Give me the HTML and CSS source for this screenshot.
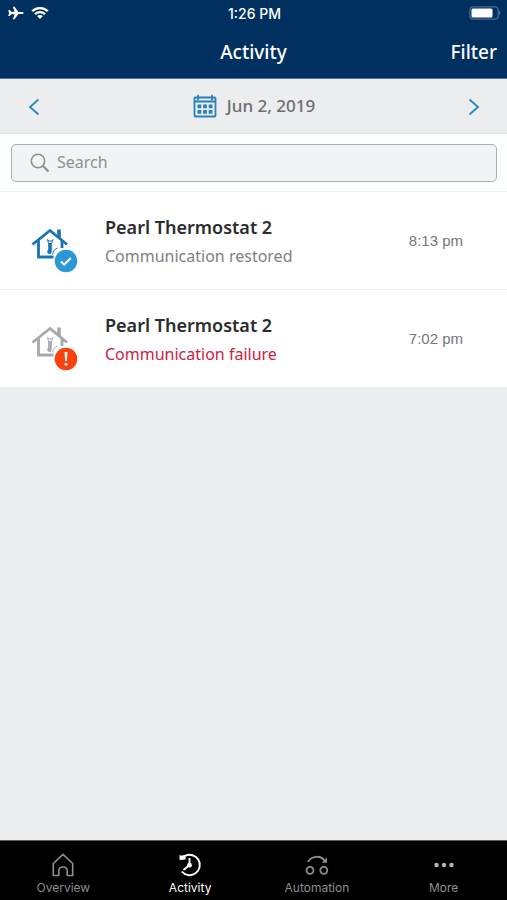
FILE: index.html
```html
<!DOCTYPE html>
<html lang="en">

<head>
    <meta charset="UTF-8">
    <meta name="viewport" content="width=device-width, initial-scale=1">
    <title>Activity</title>
    <link rel="stylesheet" href="styles.css">
</head>

<body>

    <header class="header">
        <div class="status-bar">
            <div class="status-left">
                <svg width="16" height="14" viewBox="0 0 16 14" fill="#fff">
                    <path d="M15.600 7c0 .6-.7 1.100-1.600 1.100H10.400L6.600 13.300H4.800L6.700 8.200H3.300L1.900 10H.3L1 7 .3 4h1.600l1.400 1.800h3.400L4.800.7h1.800l3.800 5.200H14c.9 0 1.600.5 1.600 1.100z" />
                </svg>
                <svg width="18" height="14" viewBox="0 0 18 14" fill="none" stroke="#fff" stroke-width="2.300">
                    <path d="M1.200 5.200c4.300-4.100 11.300-4.100 15.600 0M4 8.200c2.800-2.700 7.200-2.700 10 0" />
                    <path d="M9 13L6.100 10c1.600-1.500 4.200-1.500 5.800 0z" fill="#fff" stroke="none" />
                </svg>
            </div>
            <span class="status-time">1:26 PM</span>
            <div class="status-right">
                <svg width="32" height="14" viewBox="0 0 32 14">
                    <rect x=".8" y=".8" width="28.400" height="12.400" rx="3.500" fill="none" stroke="#4a6a92" stroke-width="1.200" />
                    <rect x="2.500" y="2.500" width="21" height="9" rx="1.500" fill="#fff" />
                    <path d="M30.300 4.800c1.500.6 1.500 3.800 0 4.400z" fill="#6682a4" />
                </svg>
            </div>
        </div>
        <div class="nav-bar">
            <h1 class="nav-title">Activity</h1>
            <button class="filter-button" type="button">Filter</button>
        </div>
    </header>

    <div class="date-bar">
        <button class="arrow" type="button" aria-label="Previous day">
            <svg width="12" height="18" viewBox="0 0 12 18" fill="none" stroke="#2a86c5" stroke-width="1.800">
                <path d="M10.500 1.500L2 9l8.500 7.500" />
            </svg>
        </button>
        <button class="date" type="button">
            <svg width="24" height="24" viewBox="0 0 24 24" fill="none" stroke="#2a80bd" stroke-width="1.800">
                <rect x="1.500" y="3.500" width="21" height="19" rx="1" />
                <path d="M1.500 7.500h21M5 .8v5.400M19 .8v5.400" />
                <path d="M4.500 12.300h15M4.500 17.800h15" stroke-width="3.800" stroke-dasharray="3.800 1.800" />
            </svg>
            Jun 2, 2019
        </button>
        <button class="arrow" type="button" aria-label="Next day">
            <svg width="12" height="18" viewBox="0 0 12 18" fill="none" stroke="#2a86c5" stroke-width="1.800">
                <path d="M1.500 1.500L10 9l-8.500 7.500" />
            </svg>
        </button>
    </div>

    <div class="search">
        <label class="search-box">
            <svg width="20" height="20" viewBox="0 0 20 20" fill="none" stroke="#8b8f92">
                <circle cx="8" cy="8" r="6.700" stroke-width="1.500" />
                <path d="M12.800 12.800l5.700 5.700" stroke-width="2.200" />
            </svg>
            <input class="search-input" type="text" placeholder="Search" aria-label="Search">
        </label>
    </div>

    <main class="content">
        <ul class="event-list">
            <li class="event">
                <svg class="event-icon" width="48" height="48" viewBox="0 0 48 48" fill="none" stroke="#1a73b5">
                    <path d="M1.500 18.500L19 4.500l17 14" stroke-width="2.800" />
                    <path d="M7.500 14.500v16.500h15M31 15v7" stroke-width="2.800" />
                    <path d="M28 3.500v8.500" stroke-width="3.600" />
                    <path d="M16.500 13.500l1.500 1.500h2.500l1.500-1.500-1.500 4h-3z" stroke-width="1" />
                    <path d="M19 17v7.500" stroke-width="3.600" />
                    <circle cx="18.500" cy="25.800" r="2.300" fill="#1a73b5" stroke="none" />
                    <path d="M21.500 28.500c.5-3 2.500-5.500 5-6.500" stroke-width="1" />
                    <circle cx="35" cy="35" r="11.300" fill="#2b97d7" stroke="none" />
                    <path d="M29.800 35.500l3.400 3 6.600-6.500" stroke="#fff" stroke-width="2.200" />
                </svg>
                <div class="event-text">
                    <h2 class="event-name">Pearl Thermostat 2</h2>
                    <p class="event-status">Communication restored</p>
                </div>
                <time class="event-time">8:13 pm</time>
            </li>
            <li class="event">
                <svg class="event-icon" width="48" height="48" viewBox="0 0 48 48" fill="none" stroke="#a5a9ac">
                    <path d="M1.500 18.500L19 4.500l17 14" stroke-width="2.800" />
                    <path d="M7.500 14.500v16.500h15M31 15v7" stroke-width="2.800" />
                    <path d="M28 3.500v8.500" stroke-width="3.600" />
                    <path d="M16.500 13.500l1.500 1.500h2.500l1.500-1.500-1.500 4h-3z" stroke-width="1" />
                    <path d="M19 17v7.500" stroke-width="3.600" />
                    <circle cx="18.500" cy="25.800" r="2.300" fill="#a5a9ac" stroke="none" />
                    <path d="M21.500 28.500c.5-3 2.500-5.500 5-6.500" stroke-width="1" />
                    <circle cx="35" cy="35" r="11.300" fill="#f9420e" stroke="none" />
                    <path d="M33.600 28h2.800l-.5 9h-1.800z" fill="#fff" stroke="none" />
                    <circle cx="35" cy="40.300" r="1.500" fill="#fff" stroke="none" />
                </svg>
                <div class="event-text">
                    <h2 class="event-name">Pearl Thermostat 2</h2>
                    <p class="event-status failure">Communication failure</p>
                </div>
                <time class="event-time">7:02 pm</time>
            </li>
        </ul>
    </main>

    <nav class="tab-bar">
        <a class="tab" href="#overview">
            <svg width="24" height="24" viewBox="0 0 24 24" fill="none" stroke="currentColor" stroke-width="1.600" stroke-linejoin="round">
                <path d="M2.300 10.500L12 1.300l9.700 9.200v12h-5.500v-4.700c0-5-8.400-5-8.400 0v4.700H2.300z" />
            </svg>
            Overview
        </a>
        <a class="tab active" href="#activity">
            <svg width="24" height="24" viewBox="0 0 24 24" fill="none" stroke="currentColor" stroke-width="1.900">
                <path d="M7.200 2.800A10.200 10.200 0 1 1 3.800 18.500" />
                <path d="M1.500 1.500l1.300 1.300 4.800-1v4.700l-6 .4z" fill="currentColor" stroke="none" />
                <path d="M11.500 5v7L5.500 17" />
                <circle cx="11.500" cy="12.200" r="2.400" fill="currentColor" stroke="none" />
            </svg>
            Activity
        </a>
        <a class="tab" href="#automation">
            <svg width="24" height="24" viewBox="0 0 24 24" fill="none" stroke="currentColor" stroke-width="1.800">
                <circle cx="5" cy="17.300" r="3.500" />
                <circle cx="18.800" cy="17.300" r="3.500" />
                <path d="M2.800 8.800c4-6 12.500-7 17-1" />
                <path d="M22 4.500v5.300h-5.500z" fill="currentColor" stroke="none" />
            </svg>
            Automation
        </a>
        <a class="tab" href="#more">
            <svg width="24" height="24" viewBox="0 0 24 24" fill="#b5b5b5">
                <circle cx="4.500" cy="12" r="2.200" />
                <circle cx="12" cy="12" r="2.200" />
                <circle cx="19.500" cy="12" r="2.200" />
            </svg>
            More
        </a>
    </nav>

</body>

</html>
```
FILE: styles.css
```css
* {
    box-sizing: border-box;
}

body {
    display: flex;
    flex-direction: column;
    min-height: 100vh;
    margin: 0;
    background-color: #ebedee;
    font-family: "Noto Sans", "Open Sans", sans-serif;
}

h1,
h2,
p,
ul {
    margin: 0;
    padding: 0;
}

button {
    padding: 0;
    border: none;
    background: none;
    font-family: inherit;
    cursor: pointer;
}

svg {
    display: block;
    flex-shrink: 0;
}

/* Header */
.header {
    background-color: #003060;
    color: #fff;
    border-bottom: 1px solid #54779e;
}

.status-bar,
.nav-bar {
    display: grid;
    grid-template-columns: 1fr auto 1fr;
    align-items: center;
}

.status-bar {
    height: 26px;
    padding: 0 6px 0 8px;
}

.status-left {
    display: flex;
    gap: 7px;
}

.status-right {
    justify-self: end;
}

.status-time {
    font-family: Inter, sans-serif;
    font-size: 14px;
    font-weight: 500;
}

.nav-bar {
    height: 52px;
    padding: 0 10px;
}

.nav-title {
    grid-column: 2;
    font-size: 19px;
    font-weight: 500;
}

.filter-button {
    justify-self: end;
    color: #fff;
    font-size: 19px;
    font-weight: 500;
}

/* Date picker */
.date-bar {
    display: flex;
    justify-content: space-between;
    align-items: center;
    height: 55px;
    padding: 2px 27px 0 28px;
    border-bottom: 1px solid #dfe1e2;
}

.date {
    display: flex;
    align-items: center;
    gap: 10px;
    padding-bottom: 3px;
    color: #6b6f72;
    font-size: 17px;
    font-weight: 500;
}

/* Search */
.search {
    padding: 10px 10px 9px 11px;
    background-color: #fcfdfd;
    border-bottom: 1px solid #eff0f1;
}

.search-box {
    display: flex;
    align-items: center;
    gap: 7px;
    height: 38px;
    padding: 0 18px;
    border: 1px solid #a9adaf;
    border-radius: 5px;
    background-color: #f1f3f5;
}

.search-input {
    flex: 1;
    min-width: 0;
    height: 32px;
    padding: 0 0 3px;
    border: none;
    outline: none;
    background: none;
    color: #54585a;
    font-family: inherit;
    font-size: 16px;
}

.search-input::placeholder {
    color: #8b8f92;
    opacity: 1;
}

/* Events */
.content {
    flex: 1;
}

.event-list {
    list-style: none;
    background-color: #fff;
}

.event {
    display: flex;
    align-items: center;
    height: 98px;
    padding: 0 44px 0 31px;
    border-bottom: 1px solid #f2f3f3;
}

.event:last-child {
    height: 97px;
    border-bottom: none;
}

.event-icon {
    margin-top: 18px;
}

.event-text {
    flex: 1;
    padding-left: 26px;
}

.event-name {
    color: #2b2c2d;
    font-size: 18px;
    font-weight: 600;
    line-height: 30px;
}

.event-status {
    color: #7d8184;
    font-size: 16px;
    line-height: 28px;
}

.failure {
    color: #cd2140;
}

.event-time {
    color: #737678;
    font-family: "Liberation Sans", Arial, sans-serif;
    font-size: 15px;
}

/* Tab bar */
.tab-bar {
    display: grid;
    grid-template-columns: repeat(4, 1fr);
    height: 60px;
    padding-top: 12px;
    border-top: 1px solid #5b5d5e;
    background-color: #000;
}

.tab {
    display: flex;
    flex-direction: column;
    align-items: center;
    gap: 3px;
    color: #8e8e8e;
    font-family: Inter, sans-serif;
    font-size: 12px;
    line-height: 16px;
    text-decoration: none;
}

.active {
    color: #fff;
}
```
